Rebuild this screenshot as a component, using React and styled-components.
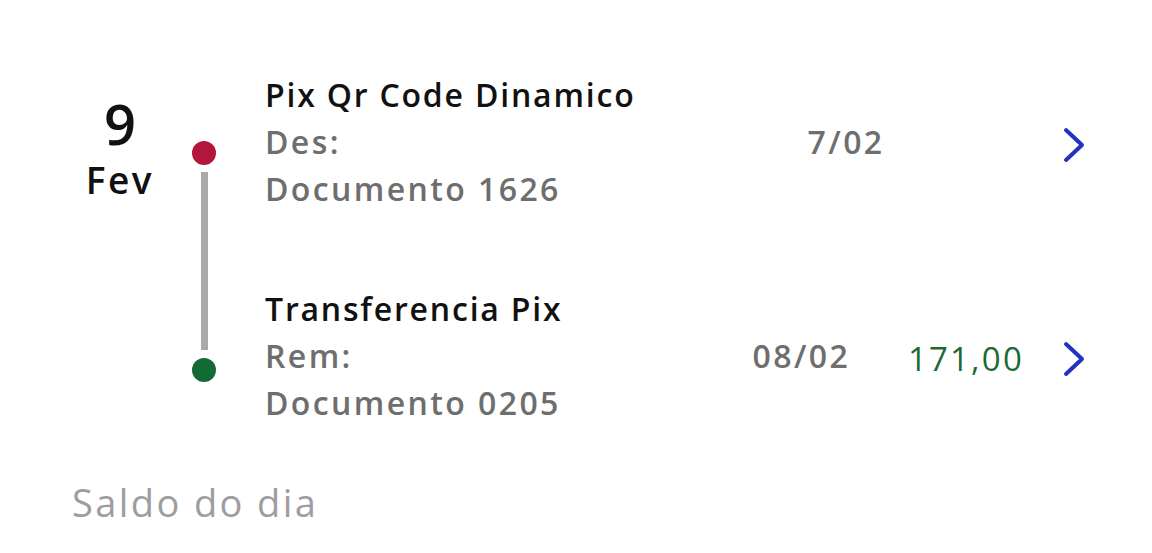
import styled, { createGlobalStyle } from "styled-components";

const GlobalStyle = createGlobalStyle`
  html, body {
    margin: 0;
    padding: 0;
    background: #ffffff;
  }
  body {
    font-family: "Open Sans", "Noto Sans", sans-serif;
    -webkit-font-smoothing: antialiased;
  }
`;

const Page = styled.div`
  width: 1152px;
  height: 553px;
  box-sizing: border-box;
  padding: 71px 66px 0 72px;
  overflow: hidden;
`;

const DayGroup = styled.section`
  display: grid;
  grid-template-columns: 96px 1fr;
  column-gap: 24px;
`;

const DateCol = styled.div`
  display: flex;
  flex-direction: column;
  align-items: center;
  padding-top: 20px;
  color: #111111;
`;

const DayNum = styled.div`
  font-size: 56px;
  font-weight: 600;
  line-height: 64px;
`;

const Month = styled.div`
  margin-top: 3px;
  font-size: 37px;
  font-weight: 600;
  line-height: 44px;
  letter-spacing: 2.5px;
`;

const List = styled.div`
  display: flex;
  flex-direction: column;
`;

const Item = styled.div`
  display: flex;
`;

const Marker = styled.div`
  width: 24px;
  margin-right: 49px;
  display: flex;
  flex-direction: column;
  align-items: center;
`;

const TopRail = styled.div`
  width: 7px;
  height: ${(p) => p.$h}px;
  margin-bottom: 8px;
  background: ${(p) => (p.$hidden ? "transparent" : "#a9a9a9")};
`;

const BottomRail = styled.div`
  width: 7px;
  flex: 1;
  margin-top: 7px;
  background: #a9a9a9;
`;

const Dot = styled.div`
  width: 24px;
  height: 24px;
  border-radius: 50%;
  background: ${(p) => p.$color};
  flex-shrink: 0;
`;

const Content = styled.div`
  flex: 1;
  min-width: 0;
  padding-bottom: ${(p) => (p.$last ? "0" : "73px")};
`;

const Line = styled.div`
  font-size: 32px;
  line-height: 47px;
  white-space: nowrap;
  font-weight: 600;
  letter-spacing: ${(p) => (p.$title ? "1.8px" : "2.4px")};
  color: ${(p) => (p.$title ? "#111111" : "#6e6e6e")};
`;

const Redacted = styled.span`
  display: inline-block;
  width: ${(p) => p.$w}px;
`;

const Side = styled.div`
  display: flex;
  align-items: center;
  gap: 38px;
  height: 47px;
  margin-top: 50px;
`;

const Amount = styled.div`
  font-size: 33px;
  font-weight: 500;
  letter-spacing: 2.2px;
  color: #1b6a36;
  min-width: 116px;
  text-align: right;
`;

const Chevron = styled.svg`
  width: 24px;
  height: 36px;
  display: block;
`;

const Footer = styled.div`
  margin-top: 51px;
  font-size: 38px;
  font-weight: 400;
  letter-spacing: 2.4px;
  color: #9d9da1;
  line-height: 50px;
`;

const ChevronIcon = () => (
  <Chevron viewBox="0 0 24 36" fill="none">
    <path
      d="M4 3 L20 18 L4 33"
      stroke="#2233c2"
      strokeWidth="4"
      strokeLinecap="round"
      strokeLinejoin="round"
    />
  </Chevron>
);

const items = [
  {
    id: 1,
    title: "Pix Qr Code Dinamico",
    party: "Des:",
    hidden: 456,
    date: "7/02",
    doc: "Documento 1626",
    amount: "",
    color: "#b3163a",
    rail: 62,
  },
  {
    id: 2,
    title: "Transferencia Pix",
    party: "Rem:",
    hidden: 389,
    date: "08/02",
    doc: "Documento 0205",
    amount: "171,00",
    color: "#136a33",
    rail: 65,
  },
];

export default function App() {
  return (
    <>
      <GlobalStyle />
      <Page>
        <DayGroup>
          <DateCol>
            <DayNum>9</DayNum>
            <Month>Fev</Month>
          </DateCol>
          <List>
            {items.map((it, i) => {
              const first = i === 0;
              const last = i === items.length - 1;
              return (
                <Item key={it.id}>
                  <Marker>
                    <TopRail $h={it.rail} $hidden={first} />
                    <Dot $color={it.color} />
                    {!last && <BottomRail />}
                  </Marker>
                  <Content $last={last}>
                    <Line $title>{it.title}</Line>
                    <Line>
                      {it.party} <Redacted $w={it.hidden} />
                      {it.date}
                    </Line>
                    <Line>{it.doc}</Line>
                  </Content>
                  <Side>
                    <Amount>{it.amount}</Amount>
                    <ChevronIcon />
                  </Side>
                </Item>
              );
            })}
          </List>
        </DayGroup>
        <Footer>Saldo do dia</Footer>
      </Page>
    </>
  );
}
